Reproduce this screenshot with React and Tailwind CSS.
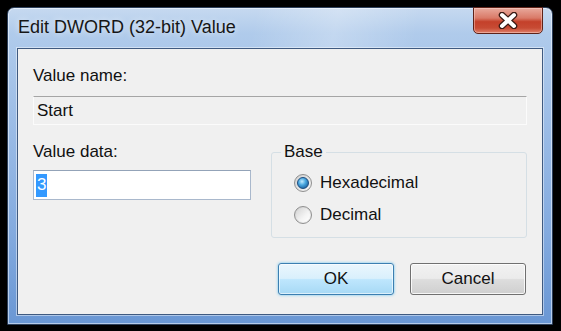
import React from 'react';

function Radio({ checked, label }) {
  return (
    <label className="flex items-center h-5 gap-2 ml-[22px]">
      <span className="w-[18px] h-[18px] rounded-full border border-[#8f8f8f] bg-[linear-gradient(135deg,#cfcfcf,#f7f7f7)] flex items-center justify-center">
        {checked ? (
          <span className="w-[12px] h-[12px] rounded-full border border-[#1b4d80] bg-[radial-gradient(circle_at_40%_35%,#c4ecff_0%,#4aa8e0_40%,#1c5e9c_85%)]" />
        ) : (
          <span className="w-[14px] h-[14px] rounded-full bg-[linear-gradient(135deg,#d4d4d4,#f4f4f4_60%,#ffffff)]" />
        )}
      </span>
      <span>{label}</span>
    </label>
  );
}

export default function App() {
  return (
    <div className="w-[561px] h-[331px] bg-black pt-[7px] pl-[7px] font-['Liberation_Sans',Arial,sans-serif] text-[17px] leading-5 text-[#111]">
      {/* Window frame */}
      <div className="w-[546px] h-[318px] rounded-t-[7px] border border-[#2c3f5a] bg-[linear-gradient(180deg,#c6d9f0_0%,#b0cbeb_8%,#9dbde6_35%,#84abdf_70%,#6a97d4_100%)] shadow-[inset_0_0_0_1px_rgba(255,255,255,0.5)] flex flex-col">
        {/* Title bar */}
        <div className="h-[40px] flex items-start justify-between pl-[10px] pr-[9px] bg-[linear-gradient(100deg,transparent_45%,rgba(255,255,255,0.25)_60%,transparent_75%)] rounded-t-[7px]">
          <span className="mt-[9px] text-[18px] text-[#161616] [text-shadow:0_0_6px_rgba(255,255,255,0.8)]">
            Edit DWORD (32-bit) Value
          </span>
          <button className="w-[70px] h-[27px] -mt-px rounded-b-[5px] border border-[#5e2218] bg-[linear-gradient(180deg,#e8a99c_0%,#d97a68_40%,#c4402a_55%,#c74b34_80%,#e0806a_100%)] shadow-[inset_0_0_0_1px_rgba(255,220,210,0.45)] flex items-center justify-center">
            <svg width="22" height="17" viewBox="0 0 22 17">
              <path d="M5 3 L17 14 M17 3 L5 14" stroke="#3a1a14" strokeWidth="6.5" strokeLinecap="round" />
              <path d="M5 3 L17 14 M17 3 L5 14" stroke="#ffffff" strokeWidth="4" strokeLinecap="round" />
            </svg>
          </button>
        </div>

        {/* Client area */}
        <div className="mx-[9px] h-[267px] border border-[#3f5a80] bg-[#f0f0f0] shadow-[0_0_0_1px_rgba(255,255,255,0.45)] px-[15px] pt-[17px] flex flex-col">
          <div>Value name:</div>
          <div className="mt-[10px] h-[29px] border border-t-[#a5a5a5] border-x-[#fbfbfb] border-b-[#fbfbfb] pl-[3px] flex items-center">
            Start
          </div>

          <div className="mt-[17px] flex gap-[20px]">
            <div className="w-[218px] flex flex-col">
              <div>Value data:</div>
              <div className="mt-[8px] h-[30px] bg-white border border-[#a9b8cc] border-t-[#93a3b8] pl-[2px] flex items-center">
                <span className="bg-[#3399ff] text-white h-[23px] px-px flex items-center">3</span>
              </div>
            </div>

            <fieldset className="w-[256px] h-[96px] border border-[#d5dfe5] rounded-[3px] flex flex-col">
              <legend className="ml-[9px] px-[3px]">Base</legend>
              <div className="mt-[11px] flex flex-col gap-[12px]">
                <Radio checked label="Hexadecimal" />
                <Radio label="Decimal" />
              </div>
            </fieldset>
          </div>

          <div className="mt-[25px] flex justify-end gap-[16px] pr-px">
            <button className="w-[116px] h-[32px] rounded-[3px] border border-[#3c7fb1] bg-[linear-gradient(180deg,#eaf6fd_0%,#d9f0fc_48%,#bee6fd_52%,#a7d9f5_100%)] shadow-[0_0_3px_#67c3f0,inset_0_0_0_1px_rgba(255,255,255,0.6)]">
              OK
            </button>
            <button className="w-[116px] h-[32px] rounded-[3px] border border-[#707070] bg-[linear-gradient(180deg,#f2f2f2_0%,#ebebeb_48%,#dddddd_52%,#cfcfcf_100%)] shadow-[inset_0_0_0_1px_rgba(255,255,255,0.8)]">
              Cancel
            </button>
          </div>
        </div>
      </div>
    </div>
  );
}
